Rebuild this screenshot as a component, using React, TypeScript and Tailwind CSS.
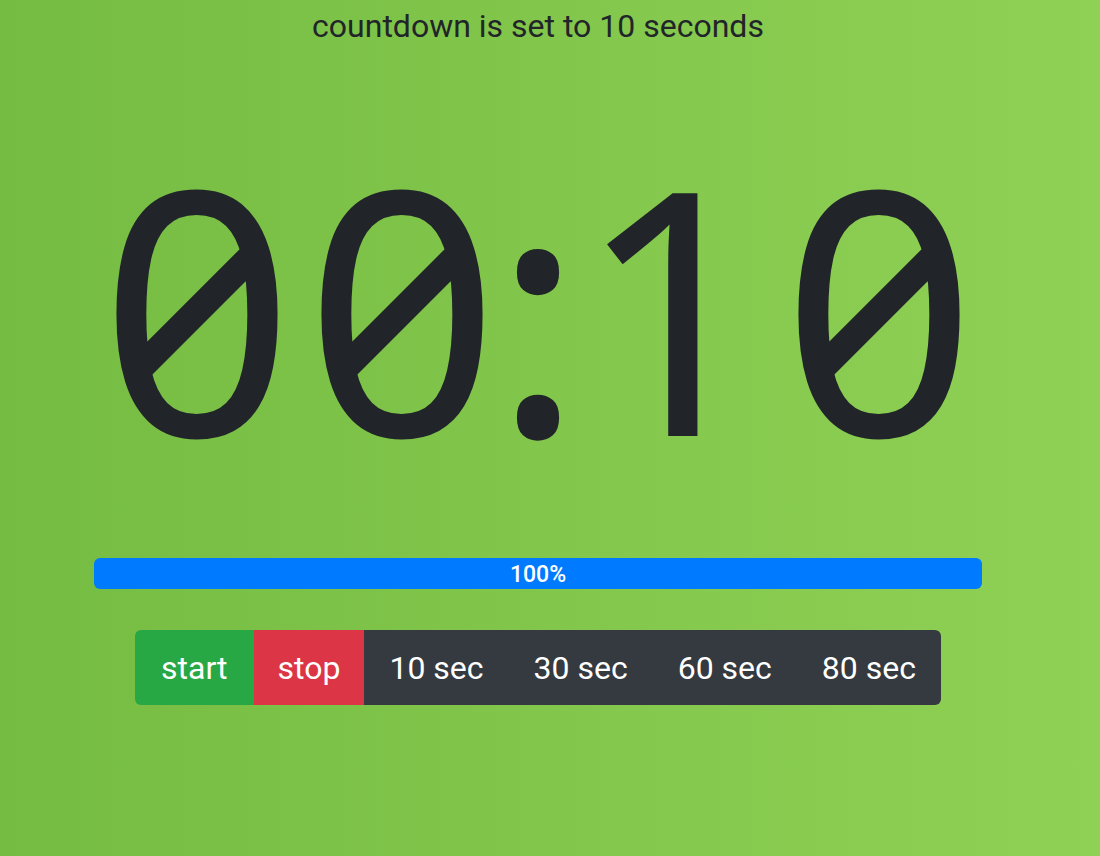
const presets = [10, 30, 60, 80];
const chars = ["0", "0", ":", "1", "0"];

export default function App() {
  return (
    <div className="min-h-[856px] w-full bg-gradient-to-r from-[#75bc42] to-[#8fd155] font-['Roboto',sans-serif] text-[#212529]">
      <div className="flex w-[1076px] flex-col items-center">
        <h3 className="pt-[2px] text-[32px] leading-[48px]">countdown is set to 10 seconds</h3>
        <div className="mt-[85px] flex font-['Noto_Sans',sans-serif] text-[340px] leading-none [font-feature-settings:'zero']">
          {chars.map((c, i) => (
            <span key={i} className={c === ":" ? "flex w-[67px] justify-center" : "flex w-[205px] justify-center"}>
              {c}
            </span>
          ))}
        </div>
        <div className="mt-[83px] flex h-[31px] w-[888px] overflow-hidden rounded-[6px] bg-[#e9ecef]">
          <div className="flex w-full items-center justify-center bg-[#007bff] pt-[3px] text-[23px] font-medium text-white">
            100%
          </div>
        </div>
        <div className="mt-[41px] flex h-[75px] overflow-hidden rounded-[6px] text-[32px] text-white">
          <button className="bg-[#28a745] px-[26px]">start</button>
          <button className="bg-[#dc3545] px-[24px]">stop</button>
          {presets.map((s) => (
            <button key={s} className="bg-[#343a40] px-[25px]">
              {s} sec
            </button>
          ))}
        </div>
      </div>
    </div>
  );
}
